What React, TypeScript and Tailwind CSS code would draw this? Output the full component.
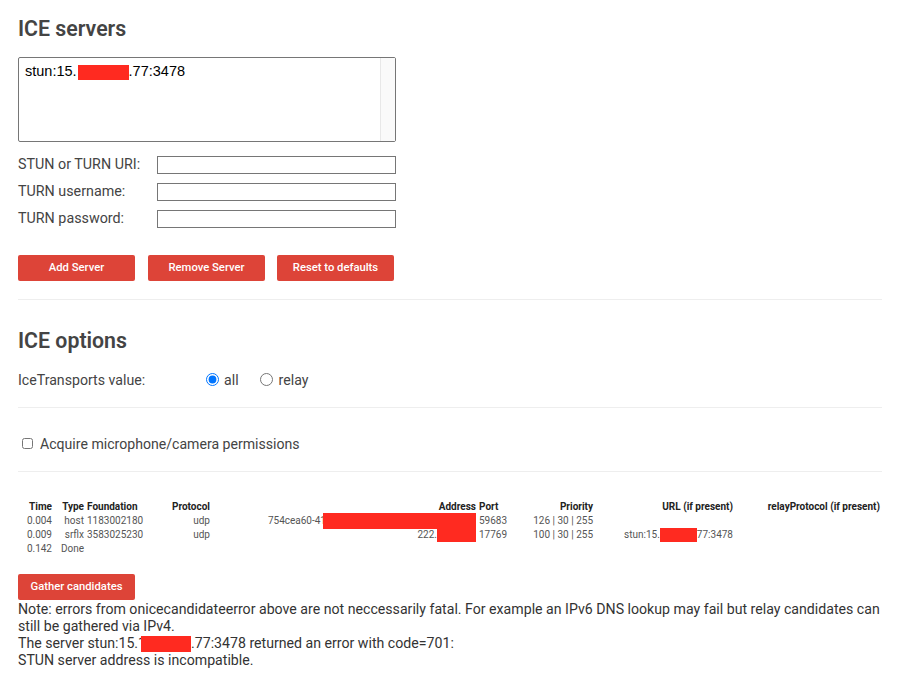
import React from "react";

const Redact = ({ className }: { className: string }) => (
  <span className={`inline-block align-middle bg-[#ff2a20] ${className}`} />
);

const Btn = ({ label, className = "" }: { label: string; className?: string }) => (
  <button className={`h-[26px] w-[117px] rounded-[2px] bg-[#dd4438] text-[11.25px] font-medium text-white ${className}`}>
    {label}
  </button>
);

const Field = ({ label }: { label: string }) => (
  <div className="flex h-[18px] w-[378px] items-center justify-between">
    <label className="text-[14.3px] text-[#444]">{label}</label>
    <input className="h-[18px] w-[239px] border border-[#767676] bg-white" />
  </div>
);

const Th = ({ children, className = "" }: { children: React.ReactNode; className?: string }) => (
  <div className={`text-right font-bold text-[#222] ${className}`}>{children}</div>
);
const Td = ({ children, className = "" }: { children?: React.ReactNode; className?: string }) => (
  <div className={`whitespace-nowrap text-right ${className}`}>{children}</div>
);

export default function App() {
  return (
    <div className="min-h-[690px] bg-white pl-[18px] pr-[29px] font-['Roboto',sans-serif] text-[#333]">
      <h2 className="pt-[15px] text-[21.3px] leading-[27px] font-semibold text-[#444]">ICE servers</h2>

      <div className="mt-[15px] flex h-[85px] w-[378px] rounded-[2px] border border-[#767676]">
        <div className="flex-1 px-[6px] pt-[4px] font-['Liberation_Sans',sans-serif] text-[14.5px] leading-[18px] text-black">
          stun:15.<Redact className="-my-1 ml-px h-[15px] w-[51px]" />.77:3478
        </div>
        <div className="w-[15px] border-l border-[#e8e8e8] bg-[#fafafa]" />
      </div>

      <div className="mt-[14px] flex flex-col gap-[9px]">
        <Field label="STUN or TURN URI:" />
        <Field label="TURN username:" />
        <Field label="TURN password:" />
      </div>

      <div className="mt-[27px] flex">
        <Btn label="Add Server" />
        <Btn label="Remove Server" className="ml-[13px]" />
        <Btn label="Reset to defaults" className="ml-[12px]" />
      </div>

      <hr className="mt-[18px] border-[#eeeeee]" />

      <h2 className="mt-[27px] text-[21.3px] leading-[27px] font-semibold text-[#444]">ICE options</h2>

      <div className="mt-[16px] flex h-[22px] items-center text-[14.15px] text-[#444]">
        <span className="w-[188px]">IceTransports value:</span>
        <input type="radio" name="t" defaultChecked className="m-0 h-[13px] w-[13px] -translate-y-[2px] accent-[#0075ff]" />
        <span className="ml-[5px]">all</span>
        <input type="radio" name="t" className="ml-[21px] h-[13px] w-[13px] -translate-y-[2px]" />
        <span className="ml-[6px]">relay</span>
      </div>

      <hr className="mt-[15px] border-[#eeeeee]" />

      <div className="mt-[27px] flex h-[20px] items-center pl-[5px] text-[14.1px] text-[#444]">
        <input type="checkbox" className="h-[11px] w-[11px] -translate-x-px -translate-y-[2px]" />
        <span className="ml-[6px]">Acquire microphone/camera permissions</span>
      </div>

      <hr className="mt-[16px] border-[#eeeeee]" />

      <div className="mt-[28px] grid grid-cols-[34px_32px_58px_68px_266px_31px_86px_140px_147px] text-[10px] leading-[14px] text-[#555]">
        <Th>Time</Th>
        <Th>Type</Th>
        <Th className="pl-[3px] !text-left">Foundation</Th>
        <Th>Protocol</Th>
        <Th>Address</Th>
        <Th className="pl-[3px] !text-left">Port</Th>
        <Th>Priority</Th>
        <Th>URL (if present)</Th>
        <Th className="whitespace-nowrap">relayProtocol (if present)</Th>

        <Td>0.004</Td>
        <Td>host</Td>
        <Td className="pl-[3px] !text-left">1183002180</Td>
        <Td>udp</Td>
        <Td>754cea60-41<Redact className="-my-1 -ml-[3px] h-[16px] w-[153px]" /></Td>
        <Td className="pl-[3px] !text-left">59683</Td>
        <Td>126 | 30 | 255</Td>
        <Td />
        <Td />

        <Td>0.009</Td>
        <Td>srflx</Td>
        <Td className="pl-[3px] !text-left">3583025230</Td>
        <Td>udp</Td>
        <Td>222.<Redact className="-my-1 h-[14px] w-[39px]" /></Td>
        <Td className="pl-[3px] !text-left">17769</Td>
        <Td>100 | 30 | 255</Td>
        <Td>stun:15.<Redact className="-my-1 h-[14px] w-[37px]" />77:3478</Td>
        <Td />

        <Td>0.142</Td>
        <Td className="ml-[9px] !text-left">Done</Td>
      </div>

      <Btn label="Gather candidates" className="mt-[18px] block" />

      <div className="mt-px text-[14.15px] leading-[17px] text-[#333]">
        Note: errors from onicecandidateerror above are not neccessarily fatal. For example an IPv6 DNS lookup may fail but relay candidates can still be gathered via IPv4.
        <br />
        The server stun:15.1<Redact className="-my-1 -ml-[5px] h-[16px] w-[50px]" />.77:3478 returned an error with code=701:
        <br />
        STUN server address is incompatible.
      </div>
    </div>
  );
}
